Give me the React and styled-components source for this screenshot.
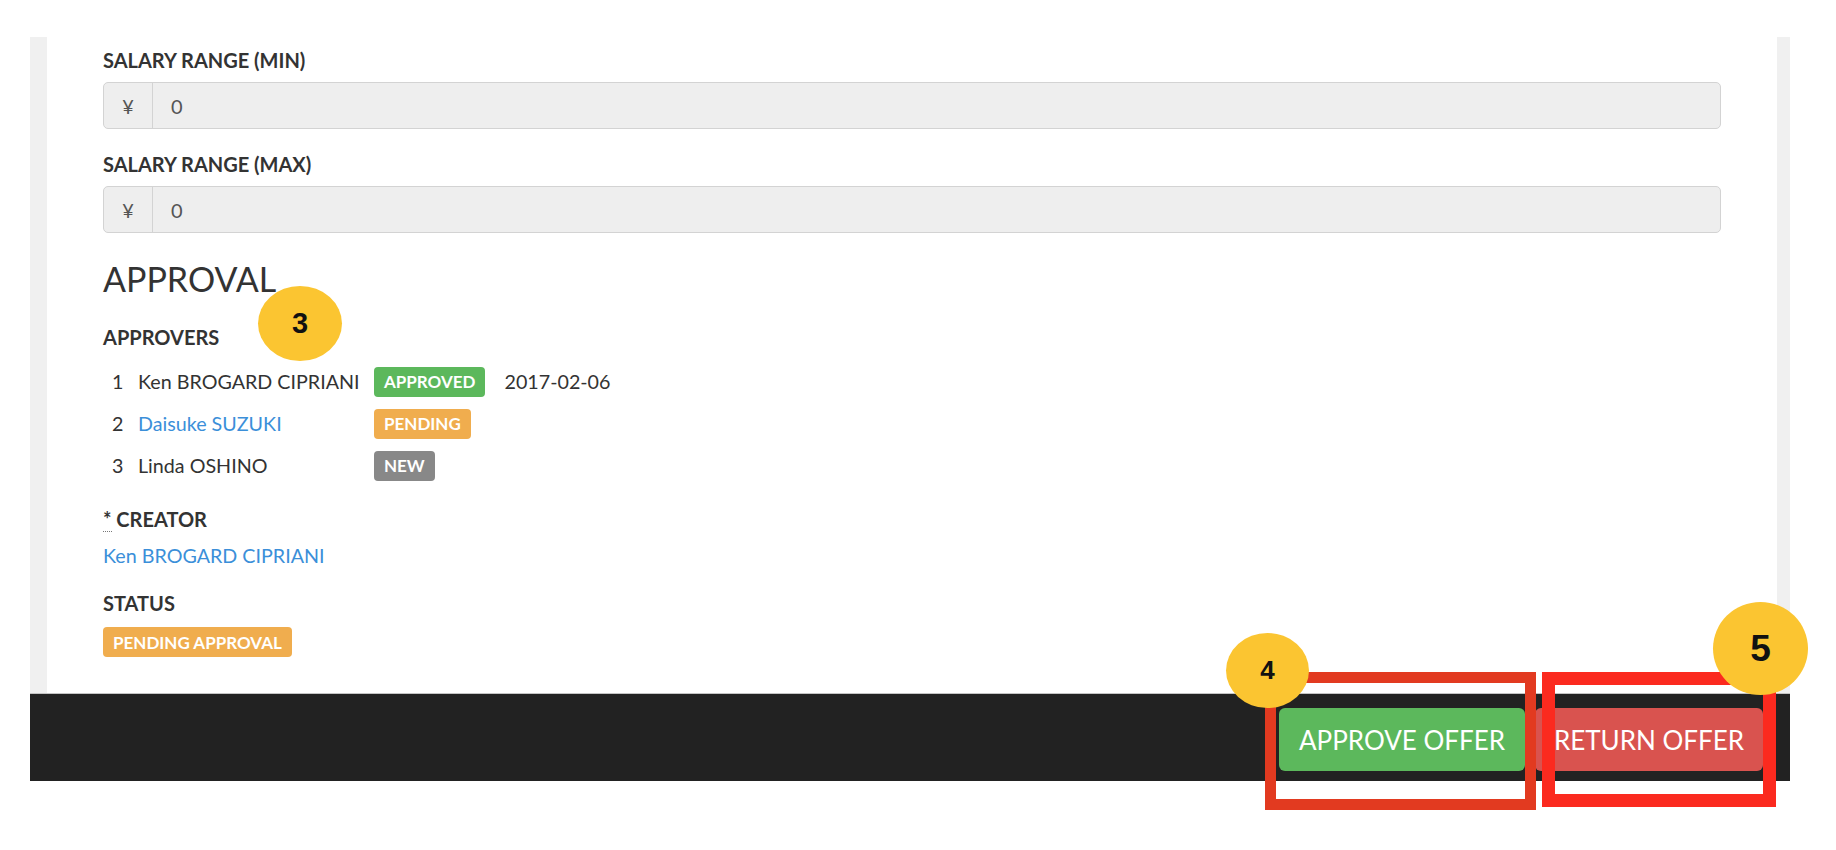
import styled, { createGlobalStyle } from 'styled-components'

const GlobalStyle = createGlobalStyle`
  body {
    margin: 0;
    background: #fff;
    font-family: Lato, "Noto Sans", sans-serif;
    color: #333;
  }
`

const Page = styled.div`
  position: relative;
  width: 1836px;
  height: 850px;
  box-sizing: border-box;
  padding: 37px 0 0 30px;
  overflow: hidden;
`

const Sheet = styled.div`
  width: 1760px;
`

const Panel = styled.div`
  background: #fff;
  border-left: 17px solid #f0f0f0;
  border-right: 13px solid #f0f0f0;
  padding: 10px 56px 36px;
`

const FieldGroup = styled.div`
  margin-bottom: ${(props) => props.$mb || 0}px;
`

const Label = styled.div`
  font-size: 20px;
  font-weight: 700;
  line-height: 26px;
  color: #333;
  margin-bottom: ${(props) => props.$mb || 0}px;
`

const Required = styled.abbr`
  text-decoration: none;
  border-bottom: 1px dotted #777;
  cursor: help;
`

const InputGroup = styled.div`
  display: flex;
  height: 47px;
  box-sizing: border-box;
  border: 1px solid #d3d3d3;
  border-radius: 5px;
  background: #eee;
  font-size: 20px;
  color: #555;
`

const Addon = styled.div`
  width: 48px;
  display: flex;
  align-items: center;
  justify-content: center;
  border-right: 1px solid #d3d3d3;
`

const Value = styled.div`
  display: flex;
  align-items: center;
  padding-left: 18px;
`

const Heading = styled.h2`
  margin: 0 0 25px;
  font-size: 34px;
  font-weight: 400;
  line-height: 40px;
  color: #333;
`

const ApproverRow = styled.div`
  display: flex;
  align-items: center;
  height: 42px;
  padding-left: 9px;
  font-size: 19.7px;
  line-height: 26px;
`

const Num = styled.span`
  width: 26px;
`

const Name = styled.span`
  width: 236px;
  color: ${(props) => (props.$link ? '#3b8fd9' : '#333')};
`

const DateText = styled.span`
  margin-left: 19px;
`

const tones = {
  green: '#5cb85c',
  orange: '#f0ad4e',
  gray: '#888',
}

const Badge = styled.span`
  display: flex;
  width: fit-content;
  align-items: center;
  height: 30px;
  box-sizing: border-box;
  padding: 0 10px;
  border-radius: 4px;
  background: ${(props) => tones[props.$tone]};
  color: #fff;
  font-size: 17px;
  font-weight: 700;
`

const Link = styled.a`
  display: block;
  font-size: 19.7px;
  line-height: 26px;
  color: #3b8fd9;
  text-decoration: none;
`

const Footer = styled.div`
  display: flex;
  justify-content: flex-end;
  gap: 10px;
  background: #222;
  border-top: 1px solid #c4c4c4;
  padding: 14px 27px 10px 0;
`

const ActionButton = styled.button`
  width: ${(props) => props.$w}px;
  height: 63px;
  padding: 0;
  border: none;
  border-radius: 6px;
  background: ${(props) => (props.$danger ? '#d9534f' : '#5cb85c')};
  color: #fff;
  font-family: Lato, "Noto Sans", sans-serif;
  font-size: 26px;
  font-weight: 400;
  text-align: center;
`

const Frame = styled.div`
  position: absolute;
  left: ${(p) => p.$x}px;
  top: ${(p) => p.$y}px;
  width: ${(p) => p.$w}px;
  height: ${(p) => p.$h}px;
  box-sizing: border-box;
  border: ${(p) => p.$b}px solid ${(p) => p.$color};
`

const Marker = styled.div`
  position: absolute;
  left: ${(p) => p.$x}px;
  top: ${(p) => p.$y}px;
  width: ${(p) => p.$w}px;
  height: ${(p) => p.$h}px;
  border-radius: 50%;
  background: #fbc531;
  display: flex;
  align-items: center;
  justify-content: center;
  font-family: "Liberation Sans", Arial, sans-serif;
  font-weight: 700;
  font-size: ${(p) => p.$size}px;
  color: #111;
`

const approvers = [
  { n: 1, name: 'Ken BROGARD CIPRIANI', status: 'APPROVED', tone: 'green', date: '2017-02-06' },
  { n: 2, name: 'Daisuke SUZUKI', status: 'PENDING', tone: 'orange', link: true },
  { n: 3, name: 'Linda OSHINO', status: 'NEW', tone: 'gray' },
]

const SalaryField = ({ label, mb }) => (
  <FieldGroup $mb={mb}>
    <Label $mb={9}>{label}</Label>
    <InputGroup>
      <Addon>¥</Addon>
      <Value>0</Value>
    </InputGroup>
  </FieldGroup>
)

const App = () => (
  <>
    <GlobalStyle />
    <Page>
      <Sheet>
        <Panel>
          <SalaryField label="SALARY RANGE (MIN)" mb={22} />
          <SalaryField label="SALARY RANGE (MAX)" mb={26} />

          <Heading>APPROVAL</Heading>

          <FieldGroup $mb={19}>
            <Label $mb={11}>APPROVERS</Label>
            {approvers.map((a) => (
              <ApproverRow key={a.n}>
                <Num>{a.n}</Num>
                <Name $link={a.link}>{a.name}</Name>
                <Badge $tone={a.tone}>{a.status}</Badge>
                {a.date && <DateText>{a.date}</DateText>}
              </ApproverRow>
            ))}
          </FieldGroup>

          <FieldGroup $mb={21}>
            <Label $mb={11}>
              <Required title="required">*</Required> CREATOR
            </Label>
            <Link href="#">Ken BROGARD CIPRIANI</Link>
          </FieldGroup>

          <FieldGroup>
            <Label $mb={11}>STATUS</Label>
            <Badge $tone="orange">PENDING APPROVAL</Badge>
          </FieldGroup>
        </Panel>

        <Footer>
          <ActionButton $w={246}>APPROVE OFFER</ActionButton>
          <ActionButton $w={228} $danger>RETURN OFFER</ActionButton>
        </Footer>
      </Sheet>

      <Frame $x={1265} $y={672} $w={271} $h={138} $b={11} $color="#e23a20" />
      <Frame $x={1542} $y={672} $w={234} $h={135} $b={13} $color="#fb2a1f" />

      <Marker $x={258} $y={286} $w={84} $h={75} $size={29}>3</Marker>
      <Marker $x={1226} $y={633} $w={83} $h={75} $size={26}>4</Marker>
      <Marker $x={1713} $y={602} $w={95} $h={93} $size={37}>5</Marker>
    </Page>
  </>
)

export default App
